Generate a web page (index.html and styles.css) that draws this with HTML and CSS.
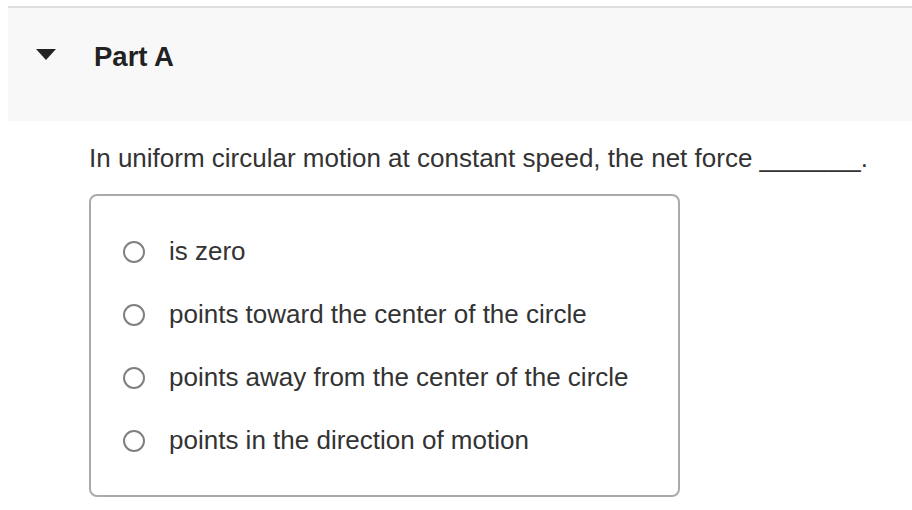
FILE: index.html
```html
<!DOCTYPE html>
<html lang="en">
<head>
<meta charset="utf-8">
<title>Part A</title>
<link rel="stylesheet" href="styles.css">
</head>
<body>
<div class="page">
  <section class="part">
    <header class="part-header">
      <svg class="toggle" width="20" height="11" viewBox="0 0 20 11" aria-hidden="true">
        <path d="M0 0 H20 L10 11 Z" fill="#222"/>
      </svg>
      <h2 class="part-title">Part A</h2>
    </header>
    <div class="part-body">
      <p class="question">In uniform circular motion at constant speed, the net force _______.</p>
      <div class="choices">
        <label class="choice"><span class="radio"></span><span class="choice-text">is zero</span></label>
        <label class="choice"><span class="radio"></span><span class="choice-text">points toward the center of the circle</span></label>
        <label class="choice"><span class="radio"></span><span class="choice-text">points away from the center of the circle</span></label>
        <label class="choice"><span class="radio"></span><span class="choice-text">points in the direction of motion</span></label>
      </div>
    </div>
  </section>
</div>
</body>
</html>
```

FILE: styles.css
```css
html, body {
  margin: 0;
  padding: 0;
  background: #fff;
}

body {
  font-family: "Liberation Sans", Arial, Helvetica, sans-serif;
  color: #333;
  overflow: hidden;
}

.page {
  padding: 6px 0 0 8px;
}

.part-header {
  display: flex;
  align-items: flex-start;
  background: #f8f8f8;
  border-top: 2px solid #dedede;
  height: 115px;
  box-sizing: border-box;
  padding: 33px 0 0 28px;
}

.toggle {
  display: block;
  margin-top: 8px;
  flex: none;
}

.part-title {
  margin: 0 0 0 38px;
  font-size: 27.5px;
  line-height: 32px;
  font-weight: bold;
  color: #222;
}

.part-body {
  padding: 22px 0 0 81px;
}

.question {
  margin: 0;
  font-size: 26px;
  line-height: 30px;
  color: #333;
}

.choices {
  margin-top: 21px;
  width: 591px;
  box-sizing: border-box;
  border: 2px solid #aaa;
  border-radius: 8px;
  padding: 40px 0 40px 32px;
  display: flex;
  flex-direction: column;
  gap: 33px;
}

.choice {
  display: flex;
  align-items: center;
  font-size: 26px;
  line-height: 30px;
  color: #333;
}

.radio {
  flex: none;
  width: 22px;
  height: 22px;
  box-sizing: border-box;
  border: 2px solid #808080;
  border-radius: 50%;
  margin-top: 1px;
  margin-right: 24px;
}
```
